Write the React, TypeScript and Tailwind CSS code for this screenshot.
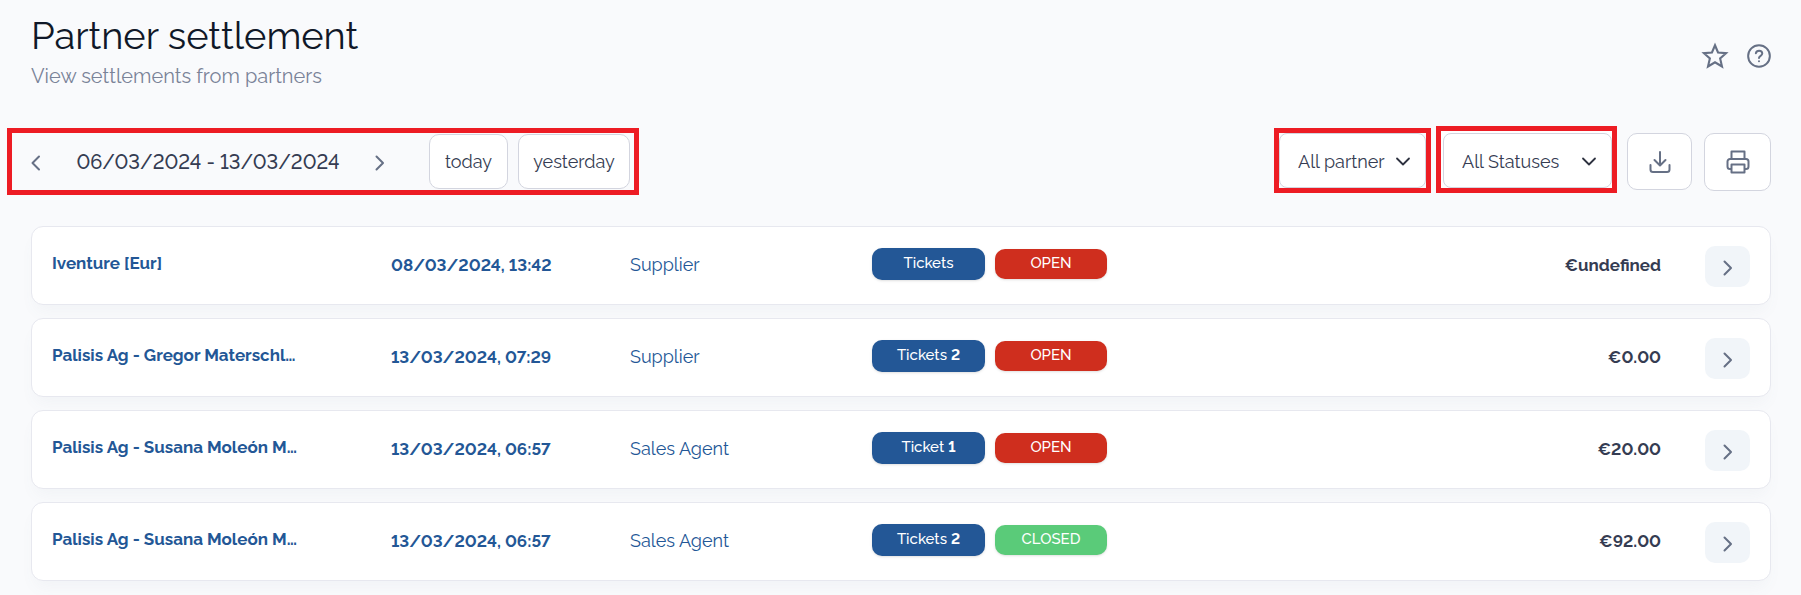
import type { ReactNode } from 'react'

type Status = 'OPEN' | 'CLOSED'

interface Settlement {
  id: number
  partner: string
  date: string
  type: string
  ticketLabel: string
  ticketCount?: number
  status: Status
  amount: string
}

const SETTLEMENTS: Settlement[] = [
  { id: 1, partner: 'Iventure [Eur]', date: '08/03/2024, 13:42', type: 'Supplier', ticketLabel: 'Tickets', status: 'OPEN', amount: '€undefined' },
  { id: 2, partner: 'Palisis Ag - Gregor Materschl…', date: '13/03/2024, 07:29', type: 'Supplier', ticketLabel: 'Tickets', ticketCount: 2, status: 'OPEN', amount: '€0.00' },
  { id: 3, partner: 'Palisis Ag - Susana Moleón M…', date: '13/03/2024, 06:57', type: 'Sales Agent', ticketLabel: 'Ticket', ticketCount: 1, status: 'OPEN', amount: '€20.00' },
  { id: 4, partner: 'Palisis Ag - Susana Moleón M…', date: '13/03/2024, 06:57', type: 'Sales Agent', ticketLabel: 'Tickets', ticketCount: 2, status: 'CLOSED', amount: '€92.00' },
]

interface IconProps {
  className?: string
  children: ReactNode
}

function Icon({ className, children }: IconProps) {
  return (
    <svg viewBox="0 0 24 24" className={className} fill="none" stroke="currentColor" strokeWidth={2} strokeLinecap="round" strokeLinejoin="round" aria-hidden="true">
      {children}
    </svg>
  )
}

function Chevron({ dir }: { dir: 'left' | 'right' }) {
  return (
    <Icon className="h-6 w-6">
      <path d={dir === 'left' ? 'M15 6.500 8.500 13l6.500 6.500' : 'M8.500 6.500 15 13l-6.500 6.500'} />
    </Icon>
  )
}

interface FilterProps {
  label: string
  value: string
}

function Filter({ label, value }: FilterProps) {
  return (
    <div className="relative h-full">
      <select aria-label={label} className="h-full w-full appearance-none rounded-lg border border-[#d3d5df] bg-white pt-0.5 pl-[18px] text-lg text-[#353c52]">
        <option>{value}</option>
      </select>
      <svg viewBox="0 0 16 16" className="pointer-events-none absolute top-1/2 right-[15px] h-4 w-4 -translate-y-1/2 text-[#2e3240]" fill="none" stroke="currentColor" strokeWidth={1.8} strokeLinecap="round" strokeLinejoin="round" aria-hidden="true">
        <path d="M2 5.500l6 6 6-6" />
      </svg>
    </div>
  )
}

function SettlementRow({ item }: { item: Settlement }) {
  return (
    <tr className="grid h-[79px] grid-cols-[339fr_239fr_242fr_428fr_361fr_89px] items-center rounded-xl border border-[#e7e8ef] bg-white px-5 text-[17px] shadow-[0_10px_16px_-4px_rgba(100,116,139,0.05)]">
      <td className="truncate pb-1 font-bold text-[#235796]">{item.partner}</td>
      <td className="font-bold text-[#235796]">{item.date}</td>
      <td className="pb-0.5 text-lg text-[#235796]">{item.type}</td>
      <td className="flex items-center gap-2.5 pb-1 text-[15px] font-medium text-white">
        <span className="flex h-8 w-[113px] items-center justify-center gap-1 rounded-[10px] bg-[#235796] shadow-sm">
          {item.ticketLabel}
          {item.ticketCount && <b>{item.ticketCount}</b>}
        </span>
        <span
          className={[
            'flex h-[30px] w-[112px] items-center justify-center rounded-[10px] shadow-sm',
            item.status === 'OPEN' ? 'bg-[#cf2e1e]' : 'bg-[#5acb79]',
          ].join(' ')}
        >
          {item.status}
        </span>
      </td>
      <td className="text-right font-bold text-[#353c52]">{item.amount}</td>
      <td className="flex justify-end pt-0.5">
        <button aria-label={`Open ${item.partner}`} className="flex h-[41px] w-[45px] items-center justify-center rounded-[10px] bg-[#f1f5f9] text-[#667085]">
          <Chevron dir="right" />
        </button>
      </td>
    </tr>
  )
}

export default function App() {
  return (
    <main className="min-h-screen bg-[#f9fafc] pt-3.5 pb-3.5 font-['Raleway','Lato',sans-serif] lining-nums">
      <header className="flex items-center justify-between pr-7 pl-[31px]">
        <div>
          <h1 className="text-[38px] leading-11 text-[#101828]">Partner settlement</h1>
          <p className="text-xl leading-9 text-[#7a8398]">View settlements from partners</p>
        </div>
        <div className="flex gap-4 pt-1 text-[#667085]">
          <button aria-label="Favourite">
            <Icon className="h-7 w-7">
              <path strokeLinejoin="miter" strokeWidth="1.8" d="M12 2.800l2.600 6.200 6.900.6-5.100 4.500 1.600 6.900-6-3.600L6 21l1.600-6.900-5.100-4.500 6.900-.6z" />
            </Icon>
          </button>
          <button aria-label="Help">
            <Icon className="h-7 w-7">
              <circle cx="12" cy="12" r="9.300" strokeWidth="1.7" />
              <path strokeWidth="1.7" d="M9.300 9.600c.3-1.300 1.400-2.100 2.800-2.100 1.500 0 2.700 1 2.700 2.400 0 1.900-2.800 2-2.800 3.800M12 16.400v.1" />
            </Icon>
          </button>
        </div>
      </header>

      <div className="mt-8 flex items-start justify-between pr-[30px] pl-[7px]">
        <div className="mt-0.5 flex h-[67px] items-center border-5 border-[#ed1c24] pr-1 pl-3 text-[#353c52]">
          <button aria-label="Previous period" className="text-[#667085]">
            <Chevron dir="left" />
          </button>
          <span className="w-[320px] text-center text-xl font-medium">06/03/2024 - 13/03/2024</span>
          <button aria-label="Next period" className="text-[#667085]">
            <Chevron dir="right" />
          </button>
          <button className="ml-[37px] h-[55px] w-[79px] rounded-[10px] border border-[#d3d5df] bg-white text-lg">today</button>
          <button className="ml-2.5 h-[55px] w-[112px] rounded-[10px] border border-[#d3d5df] bg-white text-lg">yesterday</button>
        </div>

        <div className="flex items-start">
          <div className="flex items-end gap-[5px]">
            <div className="h-[65px] w-[157px] border-5 border-[#ed1c24]">
              <Filter label="Partner" value="All partner" />
            </div>
            <div className="h-[67px] w-[181px] border-5 border-[#ed1c24] bg-white pt-0.5 pl-0.5">
              <Filter label="Status" value="All Statuses" />
            </div>
          </div>
          <button aria-label="Download" className="mt-[7px] ml-2.5 flex h-[57px] w-[65px] items-center justify-center rounded-[10px] border border-[#d3d5df] bg-white text-[#667085]">
            <Icon className="h-6 w-6">
              <path d="M12 2v13M6.500 10l5.500 5.500 5.500-5.500M2.500 15v4.500a2.500 2.500 0 0 0 2.500 2.500h14a2.500 2.500 0 0 0 2.500-2.500V15" />
            </Icon>
          </button>
          <button aria-label="Print" className="mt-[7px] ml-3 flex h-[58px] w-[67px] items-center justify-center rounded-[10px] border border-[#d3d5df] bg-white text-[#667085]">
            <Icon className="h-6 w-6">
              <path d="M5.500 9V1.500h13V9M5.500 19H4a2.500 2.500 0 0 1-2.500-2.500v-5A2.500 2.500 0 0 1 4 9h16a2.500 2.500 0 0 1 2.500 2.500v5A2.500 2.500 0 0 1 20 19h-1.500M5.500 14.500h13v8h-13z" />
            </Icon>
          </button>
        </div>
      </div>

      <table className="mt-[31px] block px-[31px] pr-[30px]" aria-label="Settlements">
        <tbody className="flex flex-col gap-[13px]">
          {SETTLEMENTS.map((item) => (
            <SettlementRow key={item.id} item={item} />
          ))}
        </tbody>
      </table>
    </main>
  )
}
